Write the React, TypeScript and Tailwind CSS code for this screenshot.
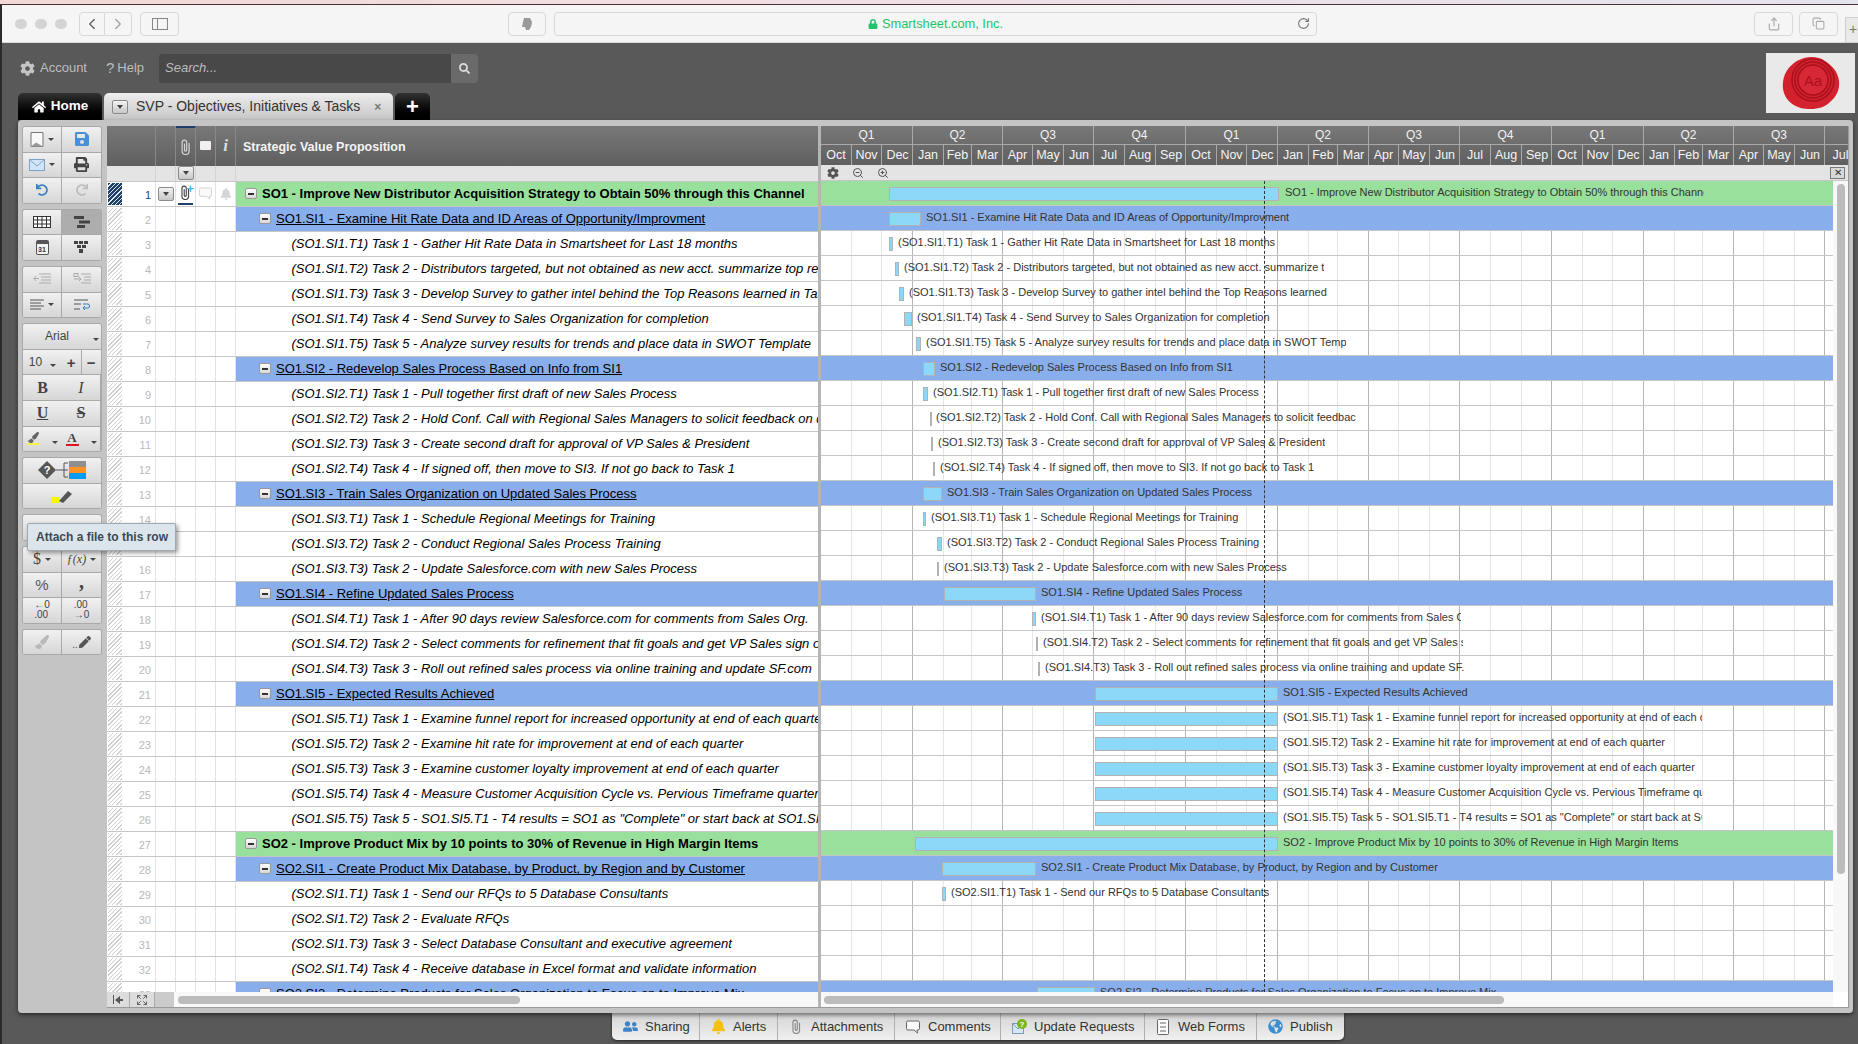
import type { ReactNode } from "react";
import {
  FaBell,
  FaCog,
  FaGlobeAmericas,
  FaHome,
  FaLock,
  FaPaintBrush,
  FaPen,
  FaPrint,
  FaRedo,
  FaSave,
  FaSearch,
  FaUndo,
  FaUserFriends,
} from "react-icons/fa";
import {
  ChevronLeft,
  ChevronRight,
  Copy,
  Expand,
  RotateCw,
  Share,
  ZoomIn,
  ZoomOut,
} from "lucide-react";

type Kind = "top" | "sub" | "task";

type Row = {
  n: number;
  kind: Kind;
  text: string;
  bar?: [number, number]; // page x of start and end
  label?: number; // page x of the gantt label
  labelEnd?: number; // where the label gets cut
};

const GANTT_X = 821;

const row = (
  n: number,
  kind: Kind,
  text: string,
  bar?: [number, number],
  label?: number,
  labelEnd?: number,
): Row => ({ n, kind, text, bar, label, labelEnd });

const ROWS: Row[] = [
  row(1, "top", "SO1 - Improve New Distributor Acquisition Strategy to Obtain 50% through this Channel", [889, 1279], 1285, 1704),
  row(2, "sub", "SO1.SI1 - Examine Hit Rate Data and ID Areas of Opportunity/Improvment", [889, 921], 926),
  row(3, "task", "(SO1.SI1.T1) Task 1 - Gather Hit Rate Data in Smartsheet for Last 18 months", [889, 893], 898),
  row(4, "task", "(SO1.SI1.T2) Task 2 - Distributors targeted, but not obtained as new acct. summarize top reasons", [895, 899], 904, 1324),
  row(5, "task", "(SO1.SI1.T3) Task 3 - Develop Survey to gather intel behind the Top Reasons learned in Task 2", [899, 904], 909, 1327),
  row(6, "task", "(SO1.SI1.T4) Task 4 - Send Survey to Sales Organization for completion", [904, 912], 917),
  row(7, "task", "(SO1.SI1.T5) Task 5 - Analyze survey results for trends and place data in SWOT Template", [916, 921], 926, 1346),
  row(8, "sub", "SO1.SI2 - Redevelop Sales Process Based on Info from SI1", [923, 935], 940),
  row(9, "task", "(SO1.SI2.T1) Task 1 - Pull together first draft of new Sales Process", [923, 928], 933),
  row(10, "task", "(SO1.SI2.T2) Task 2 - Hold Conf. Call with Regional Sales Managers to solicit feedback on draft", [930, 931], 936, 1356),
  row(11, "task", "(SO1.SI2.T3) Task 3 - Create second draft for approval of VP Sales & President", [931, 933], 938),
  row(12, "task", "(SO1.SI2.T4) Task 4 - If signed off, then move to SI3. If not go back to Task 1", [933, 935], 940),
  row(13, "sub", "SO1.SI3 - Train Sales Organization on Updated Sales Process", [923, 942], 947),
  row(14, "task", "(SO1.SI3.T1) Task 1 - Schedule Regional Meetings for Training", [923, 926], 931),
  row(15, "task", "(SO1.SI3.T2) Task 2 - Conduct Regional Sales Process Training", [937, 942], 947),
  row(16, "task", "(SO1.SI3.T3) Task 2 - Update Salesforce.com with new Sales Process", [937, 939], 944),
  row(17, "sub", "SO1.SI4 - Refine Updated Sales Process", [944, 1036], 1041),
  row(18, "task", "(SO1.SI4.T1) Task 1 - After 90 days review Salesforce.com for comments from Sales Org.", [1032, 1036], 1041, 1461),
  row(19, "task", "(SO1.SI4.T2) Task 2 - Select comments for refinement that fit goals and get VP Sales sign off", [1036, 1038], 1043, 1463),
  row(20, "task", "(SO1.SI4.T3) Task 3 - Roll out refined sales process via online training and update SF.com", [1038, 1040], 1045, 1464),
  row(21, "sub", "SO1.SI5 - Expected Results Achieved", [1095, 1278], 1283),
  row(22, "task", "(SO1.SI5.T1) Task 1 - Examine funnel report for increased opportunity at end of each quarter", [1095, 1278], 1283, 1702),
  row(23, "task", "(SO1.SI5.T2) Task 2 - Examine hit rate for improvement at end of each quarter", [1095, 1278], 1283),
  row(24, "task", "(SO1.SI5.T3) Task 3 - Examine customer loyalty improvement at end of each quarter", [1095, 1278], 1283),
  row(25, "task", "(SO1.SI5.T4) Task 4 - Measure Customer Acquisition Cycle vs. Pervious Timeframe quarter", [1095, 1278], 1283, 1702),
  row(26, "task", "(SO1.SI5.T5) Task 5 - SO1.SI5.T1 - T4 results = SO1 as \"Complete\" or start back at SO1.SI1", [1095, 1278], 1283, 1702),
  row(27, "top", "SO2 - Improve Product Mix by 10 points to 30% of Revenue in High Margin Items", [915, 1278], 1283),
  row(28, "sub", "SO2.SI1 - Create Product Mix Database, by Product, by Region and by Customer", [942, 1036], 1041),
  row(29, "task", "(SO2.SI1.T1) Task 1 - Send our RFQs to 5 Database Consultants", [942, 946], 951),
  row(30, "task", "(SO2.SI1.T2) Task 2 - Evaluate RFQs"),
  row(31, "task", "(SO2.SI1.T3) Task 3 - Select Database Consultant and executive agreement"),
  row(32, "task", "(SO2.SI1.T4) Task 4 - Receive database in Excel format and validate information"),
  row(33, "sub", "SO2.SI2 - Determine Products for Sales Organization to Focus on to Improve Mix", [1037, 1095], 1100),
];

const QUARTERS: { name: string; months: [string, number][] }[] = [
  { name: "Q1", months: [["Oct", 31], ["Nov", 30], ["Dec", 31]] },
  { name: "Q2", months: [["Jan", 31], ["Feb", 28], ["Mar", 31]] },
  { name: "Q3", months: [["Apr", 30], ["May", 31], ["Jun", 30]] },
  { name: "Q4", months: [["Jul", 31], ["Aug", 31], ["Sep", 30]] },
  { name: "Q1", months: [["Oct", 31], ["Nov", 30], ["Dec", 31]] },
  { name: "Q2", months: [["Jan", 31], ["Feb", 29], ["Mar", 31]] },
  { name: "Q3", months: [["Apr", 30], ["May", 31], ["Jun", 30]] },
  { name: "Q4", months: [["Jul", 31], ["Aug", 31], ["Sep", 30]] },
  { name: "Q1", months: [["Oct", 31], ["Nov", 30], ["Dec", 31]] },
  { name: "Q2", months: [["Jan", 31], ["Feb", 28], ["Mar", 31]] },
  { name: "Q3", months: [["Apr", 30], ["May", 31], ["Jun", 30]] },
  { name: "", months: [["Jul", 31]] },
];

const quarterDays = (q: { months: [string, number][] }) =>
  q.months.reduce((sum, m) => sum + m[1], 0);

function Clip({ size = 14, className = "" }: { size?: number; className?: string }) {
  return (
    <svg width={size * 0.7} height={size} viewBox="0 0 10 16" fill="none" stroke="currentColor" strokeWidth="1.2" className={className}>
      <path d="M8.500 4v8a3.500 3.500 0 0 1-7 0V3.500a2.300 2.300 0 0 1 4.600 0V11a1.100 1.100 0 0 1-2.200 0V4.500" />
    </svg>
  );
}

function Bubble({ size = 14, className = "" }: { size?: number; className?: string }) {
  return (
    <svg width={size} height={size} viewBox="0 0 14 14" fill="#fafafa" stroke="currentColor" strokeWidth="1" className={className}>
      <path d="M2 1h10a1.500 1.500 0 0 1 1.500 1.500v6A1.500 1.500 0 0 1 12 10h-1l.500 3L8 10H2A1.500 1.500 0 0 1 .500 8.500v-6A1.500 1.500 0 0 1 2 1z" />
    </svg>
  );
}

function TbBtn({ children, wide, on }: { children: ReactNode; wide?: boolean; on?: boolean }) {
  return (
    <div
      className={`flex h-[25.600px] items-center justify-center border-b border-r border-[#a9a9a9] [&:nth-child(2n)]:border-r-0 ${
        wide ? "w-full border-r-0" : "w-1/2"
      } ${on ? "bg-[#adadad]" : "bg-gradient-to-b from-[#f1f1f1] to-[#d6d6d6]"}`}
    >
      {children}
    </div>
  );
}

function TbGroup({ children }: { children: ReactNode }) {
  return (
    <div className="flex w-[80px] flex-wrap overflow-hidden rounded-[3px] border border-b-0 border-[#a9a9a9] text-[#555]">
      {children}
    </div>
  );
}

function Caret() {
  return <span className="ml-1 inline-block border-x-[3px] border-t-[3px] border-x-transparent border-t-[#444]" />;
}

function Lines({ w = 14 }: { w?: number }) {
  return (
    <svg width={w} height="12" viewBox="0 0 14 12" stroke="#555" strokeWidth="1">
      <path d="M0 1h14M0 4h11M0 7h14M0 10h11" />
    </svg>
  );
}

function Toolbar() {
  return (
    <div className="flex w-[89px] shrink-0 flex-col gap-[5px] pl-[4px]">
      <TbGroup>
        <TbBtn>
          <svg width="14" height="17" viewBox="0 0 14 16">
            <path d="M1 1h12v14l-12 0z" fill="#f8f8f8" stroke="#777" />
            <path d="M1 15l5-4 7 4z" fill="#999" />
          </svg>
          <Caret />
        </TbBtn>
        <TbBtn>
          <FaSave size={16} className="text-[#4a90d9]" />
        </TbBtn>
        <TbBtn>
          <svg width="16" height="12" viewBox="0 0 16 12">
            <rect x="0.500" y="0.500" width="15" height="11" fill="#cfe4f7" stroke="#7ea3c4" />
            <path d="M1 1l7 6 7-6" fill="none" stroke="#7ea3c4" />
          </svg>
          <Caret />
        </TbBtn>
        <TbBtn>
          <FaPrint size={15} className="text-[#444]" />
        </TbBtn>
        <TbBtn>
          <FaUndo size={12} className="text-[#3d7fc4]" />
        </TbBtn>
        <TbBtn>
          <FaRedo size={12} className="text-[#bdbdbd]" />
        </TbBtn>
      </TbGroup>
      <TbGroup>
        <TbBtn>
          <svg width="18" height="12" viewBox="0 0 18 12" stroke="#333" fill="#fff">
            <rect x="0.500" y="0.500" width="17" height="11" />
            <path d="M0 4h18M0 8h18M4.500 0v12M9 0v12M13.500 0v12" />
          </svg>
        </TbBtn>
        <TbBtn on>
          <svg width="16" height="12" viewBox="0 0 16 12" fill="#444">
            <path d="M0 0h10v3H0zM5 4.500h11v3H5zM3 9h8v3H3z" />
          </svg>
        </TbBtn>
        <TbBtn>
          <span className="flex h-[15px] w-[13px] items-end justify-center rounded-[2px] border border-t-[4px] border-[#555] bg-[#f4f4f4] text-[7px] font-bold leading-[9px] text-[#333]">
            31
          </span>
        </TbBtn>
        <TbBtn>
          <svg width="15" height="13" viewBox="0 0 15 13" fill="#444">
            <path d="M0 0h4v3H0zM5 0h4v3H5zM10 0h4v3h-4zM3 4h4v3H3zM8 4h4v3H8zM5 8h4v4H5z" />
          </svg>
        </TbBtn>
      </TbGroup>
      <TbGroup>
        <TbBtn>
          <svg width="18" height="12" viewBox="0 0 18 12" stroke="#aaa" fill="none">
            <path d="M6 1h12M8 4h10M8 7h10M6 10h12M1 5.500h5M3 3L1 5.500 3 8" />
          </svg>
        </TbBtn>
        <TbBtn>
          <svg width="18" height="12" viewBox="0 0 18 12" stroke="#aaa" fill="none">
            <path d="M8 1h10M11 4h7M11 7h7M8 10h10M1 6h7M6 4l2 2-2 2" />
            <rect x="1" y="0.500" width="4" height="3" />
          </svg>
        </TbBtn>
        <TbBtn>
          <Lines />
          <Caret />
        </TbBtn>
        <TbBtn>
          <svg width="16" height="12" viewBox="0 0 16 12" fill="none" stroke="#555">
            <path d="M0 1h14M0 5h7M0 10h6" />
            <path d="M9 5h5q1.500 0 1.500 2T14 9H9M11 7L9 9l2 2" stroke="#2f7fc9" />
          </svg>
        </TbBtn>
      </TbGroup>
      <TbGroup>
        <TbBtn wide>
          <span className="ml-[20px] text-[12px] text-[#444]">Arial</span>
          <span className="ml-[20px]">
            <Caret />
          </span>
        </TbBtn>
        <TbBtn>
          <span className="text-[12px] text-[#444]">10</span>
          <span className="ml-1">
            <Caret />
          </span>
        </TbBtn>
        <div className="flex w-1/2">
          <div className="flex h-[25.600px] w-1/2 items-center justify-center border-b border-r border-[#a9a9a9] bg-gradient-to-b from-[#f1f1f1] to-[#d6d6d6] text-[15px] font-bold leading-none text-[#444]">
            +
          </div>
          <div className="flex h-[25.600px] w-1/2 items-center justify-center border-b border-[#a9a9a9] bg-gradient-to-b from-[#f1f1f1] to-[#d6d6d6] text-[15px] font-bold leading-none text-[#444]">
            −
          </div>
        </div>
        <TbBtn>
          <span className="font-['Liberation_Serif',serif] text-[16px] font-bold text-[#444]">B</span>
        </TbBtn>
        <TbBtn>
          <span className="font-['Liberation_Serif',serif] text-[16px] italic text-[#444]">I</span>
        </TbBtn>
        <TbBtn>
          <span className="font-['Liberation_Serif',serif] text-[16px] font-bold text-[#444] underline">U</span>
        </TbBtn>
        <TbBtn>
          <span className="font-['Liberation_Serif',serif] text-[16px] font-bold text-[#444] line-through">S</span>
        </TbBtn>
        <TbBtn>
          <span className="flex flex-col items-center">
            <FaPaintBrush size={11} className="text-[#666]" />
            <span className="h-[2px] w-[13px] bg-[#f5f04a]" />
          </span>
          <span className="ml-2">
            <Caret />
          </span>
        </TbBtn>
        <TbBtn>
          <span className="flex flex-col items-center font-['Liberation_Serif',serif] text-[13px] font-bold leading-[12px] text-[#444]">
            A
            <span className="h-[2px] w-[13px] bg-[#e0141c]" />
          </span>
          <span className="ml-2">
            <Caret />
          </span>
        </TbBtn>
      </TbGroup>
      <TbGroup>
        <TbBtn wide>
          <svg width="50" height="20" viewBox="0 0 50 20">
            <path d="M10 1l9 9-9 9-9-9z" fill="#555" />
            <text x="10" y="14" textAnchor="middle" fontSize="11" fontWeight="bold" fill="#fff" fontFamily="Liberation Sans">?</text>
            <path d="M19 10h8M27 3v14M27 3h4M27 17h4M27 10h4" stroke="#555" fill="none" />
            <rect x="32" y="1" width="17" height="6" fill="#8f8f8f" />
            <rect x="32" y="7" width="17" height="6" fill="#ff9224" />
            <rect x="32" y="13" width="17" height="6" fill="#0a9bf0" />
          </svg>
        </TbBtn>
        <TbBtn wide>
          <svg width="22" height="16" viewBox="0 0 22 16">
            <rect x="0" y="9" width="8" height="6" fill="#f8f800" />
            <path d="M8 13l9-10 4 3-9 9z" fill="#555" />
          </svg>
        </TbBtn>
      </TbGroup>
      <TbGroup>
        <TbBtn wide>
          <span />
        </TbBtn>
      </TbGroup>
      <TbGroup>
        <TbBtn>
          <span className="font-['Liberation_Serif',serif] text-[16px] text-[#444]">$</span>
          <Caret />
        </TbBtn>
        <TbBtn>
          <span className="font-['Liberation_Serif',serif] text-[12px] italic text-[#444]">ƒ(x)</span>
          <Caret />
        </TbBtn>
        <TbBtn>
          <span className="text-[15px] text-[#555]">%</span>
        </TbBtn>
        <TbBtn>
          <span className="-mt-[8px] font-['Liberation_Serif',serif] text-[20px] font-bold leading-[14px] text-[#444]">,</span>
        </TbBtn>
        <TbBtn>
          <span className="text-[10px] leading-[10px] text-[#444]">
            ←0
            <br />
            .00
          </span>
        </TbBtn>
        <TbBtn>
          <span className="text-[10px] leading-[10px] text-[#444]">
            .00
            <br />
            →0
          </span>
        </TbBtn>
      </TbGroup>
      <TbGroup>
        <TbBtn>
          <FaPaintBrush size={14} className="text-[#b8b8b8]" />
        </TbBtn>
        <TbBtn>
          <span className="mr-[1px] mt-[6px] text-[10px] leading-none text-[#555]">..</span>
          <FaPen size={12} className="text-[#555]" />
        </TbBtn>
      </TbGroup>
    </div>
  );
}

function Minus() {
  return (
    <span className="flex h-[11px] w-[12px] shrink-0 items-center justify-center rounded-[2px] border border-[#999] bg-gradient-to-b from-white to-[#d8d8d8]">
      <span className="h-[2px] w-[6px] bg-[#333]" />
    </span>
  );
}

function SmallDrop({ className = "" }: { className?: string }) {
  return (
    <span
      className={`flex h-[14px] w-[16px] items-center justify-center rounded-[2px] border border-[#8a8a8a] bg-gradient-to-b from-[#f2f2f2] to-[#c8c8c8] ${className}`}
    >
      <span className="border-x-[3.500px] border-t-[4px] border-x-transparent border-t-[#444]" />
    </span>
  );
}

function SheetRow({ r }: { r: Row }) {
  const first = r.n === 1;
  const band =
    r.kind === "top" ? "bg-[#98e09b]" : r.kind === "sub" ? "bg-[#89aeec]" : "bg-white";
  return (
    <div className="flex h-[25px] shrink-0 border-b border-[#c6c6c6] bg-white">
      <div className="w-[15px] shrink-0 py-[1px] pl-[1px]">
        <div
          className={`h-full w-full ${
            first
              ? "bg-[repeating-linear-gradient(135deg,#1d3f68_0,#1d3f68_2px,#dfe6ee_2px,#dfe6ee_3px)]"
              : "bg-[repeating-linear-gradient(135deg,#cfcfcf_0,#cfcfcf_1px,#ffffff_1px,#ffffff_3px)]"
          }`}
        />
      </div>
      <div
        className={`w-[34px] shrink-0 border-r border-[#e2e2e2] pr-[4px] text-right text-[11px] leading-[26px] ${
          first ? "text-[#24477a]" : "text-[#b9b9b9]"
        }`}
      >
        {r.n}
      </div>
      <div className="flex w-[20px] shrink-0 items-center justify-center border-r border-[#e2e2e2]">
        {first && <SmallDrop />}
      </div>
      <div className="flex w-[20px] shrink-0 items-center justify-center border-r border-[#e2e2e2]">
        {first && (
          <span className="relative mx-[2px] flex h-[22px] w-full items-center justify-center border-b-2 border-b-[#1d3f68] text-[#444]">
            <Clip size={15} />
            <span className="absolute right-[-1px] top-[1px] text-[13px] font-bold leading-[10px] text-[#4db4ea]">+</span>
          </span>
        )}
      </div>
      <div className="flex w-[20px] shrink-0 items-center justify-center border-r border-[#e2e2e2]">
        {first && <Bubble size={13} className="text-[#cfcfcf]" />}
      </div>
      <div className="flex w-[20px] shrink-0 items-center justify-center border-r border-[#e2e2e2]">
        {first && <FaBell size={12} className="text-[#d6d6d6]" />}
      </div>
      <div
        className={`flex min-w-0 flex-1 items-center overflow-hidden whitespace-nowrap text-[13px] text-black ${band} ${
          r.kind === "top" ? "pl-[9px]" : r.kind === "sub" ? "pl-[23px]" : "pl-[55.500px]"
        }`}
      >
        {r.kind !== "task" && <Minus />}
        <span
          className={
            r.kind === "top"
              ? "ml-[5px] font-bold"
              : r.kind === "sub"
                ? "ml-[5px] underline"
                : "italic"
          }
        >
          {r.text}
        </span>
      </div>
    </div>
  );
}

function GanttRow({ r }: { r: Row }) {
  const band =
    r.kind === "top" ? "relative bg-[#98e09b]" : r.kind === "sub" ? "relative bg-[#89aeec]" : "relative";
  const thin = r.bar ? r.bar[1] - r.bar[0] <= 2 : false;
  return (
    <div className={`h-[25px] shrink-0 border-b border-[#c6c6c6] ${band}`}>
      {r.bar && (
        <div
          className={`absolute top-[6px] h-[14px] border border-[#b2b2b2] ${thin ? "bg-[#b2b2b2]" : "bg-[#8cd8f9]"}`}
          style={{ left: r.bar[0] - GANTT_X, width: r.bar[1] - r.bar[0] }}
        />
      )}
      {r.label !== undefined && (
        <div
          className="absolute top-[4px] overflow-hidden whitespace-nowrap text-[11px] leading-[14px] text-[#333]"
          style={{
            left: r.label - GANTT_X,
            width: r.labelEnd ? r.labelEnd - r.label : undefined,
          }}
        >
          {r.text}
        </div>
      )}
    </div>
  );
}

function SheetPane() {
  return (
    <div className="flex w-[711px] shrink-0 flex-col">
      <div className="flex h-[40px] bg-gradient-to-b from-[#787878] to-[#5f5f5f] text-white">
        <div className="w-[49px] shrink-0 border-r border-[#888]" />
        <div className="w-[20px] shrink-0 border-r border-[#888]" />
        <div className="flex w-[20px] shrink-0 items-center justify-center border-r border-t-2 border-[#888] border-t-[#1d3f68] text-[#d4d4d4]">
          <Clip size={16} />
        </div>
        <div className="flex w-[20px] shrink-0 items-center justify-center border-r border-[#888]">
          <span className="h-[9px] w-[11px] rounded-[1px] bg-[#f0f0f0]" />
        </div>
        <div className="flex w-[20px] shrink-0 items-center justify-center border-r border-[#888] font-['Liberation_Serif',serif] text-[17px] font-bold italic text-[#ddd]">
          i
        </div>
        <div className="flex flex-1 items-center pl-[7px] pt-[2px] text-[12.500px] font-bold text-[#f4f4f4]">
          Strategic Value Proposition
        </div>
      </div>
      <div className="flex h-[16px] border-b border-[#c6c6c6] bg-[#e4e4e4]">
        <div className="w-[49px] shrink-0 border-r border-[#d4d4d4]" />
        <div className="w-[20px] shrink-0 border-r border-[#d4d4d4]" />
        <div className="flex w-[20px] shrink-0 items-center justify-center border-r border-[#d4d4d4]">
          <SmallDrop className="h-[12px] w-[14px]" />
        </div>
        <div className="w-[20px] shrink-0 border-r border-[#d4d4d4]" />
        <div className="w-[20px] shrink-0 border-r border-[#d4d4d4]" />
      </div>
      <div className="h-[811px] overflow-hidden">
        {ROWS.map((r) => (
          <SheetRow key={r.n} r={r} />
        ))}
      </div>
      <div className="flex h-[15px] bg-[#f8f8f8]">
        <div className="flex h-full w-[67px] shrink-0 bg-[#cbcbcb]">
          <div className="flex w-[23px] items-center justify-center border-r border-[#aaa] bg-[#dcdcdc] text-[#555]">
            <span className="mr-[1px] h-[9px] w-[1px] bg-[#555]" />
            <span className="border-y-[4px] border-r-[5px] border-y-transparent border-r-[#555]" />
            <span className="h-[2px] w-[3px] bg-[#555]" />
          </div>
          <div className="flex w-[25px] items-center justify-center border-r border-[#aaa] bg-[#dcdcdc]">
            <Expand size={12} className="text-[#666]" />
          </div>
        </div>
        <div className="ml-[4px] mt-[4px] h-[8px] w-[342px] rounded-full bg-[#bcbcbc]" />
      </div>
    </div>
  );
}

function GanttPane() {
  return (
    <div className="relative flex min-w-0 flex-1 flex-col overflow-hidden">
      <div className="flex h-[40px] bg-gradient-to-b from-[#787878] to-[#5f5f5f] text-white">
        {QUARTERS.map((q, i) => (
          <div
            key={i}
            className="flex shrink-0 flex-col border-r border-[#aaa]"
            style={{ width: quarterDays(q) }}
          >
            <div className="flex h-[19px] items-center justify-center border-b border-[#aaa] text-[12px] text-[#f2f2f2]">
              {q.name}
            </div>
            <div className="flex flex-1">
              {q.months.map(([m, d], j) => (
                <div
                  key={j}
                  className="flex shrink-0 items-center justify-center border-r border-[#aaa] text-[12.500px] text-[#f4f4f4] last:border-r-0"
                  style={{ width: d }}
                >
                  {m}
                </div>
              ))}
            </div>
          </div>
        ))}
      </div>
      <div className="flex h-[16px] items-center border-b border-[#c6c6c6] bg-[#e4e4e4] pl-[6px] text-[#555]">
        <FaCog size={12} className="text-[#555]" />
        <ZoomOut size={12} className="ml-[13px]" />
        <ZoomIn size={12} className="ml-[13px]" />
        <span className="ml-auto mr-[3px] flex h-[12px] w-[15px] items-center justify-center border border-[#777] bg-[#d8d8d8] text-[10px] leading-none text-[#333]">
          ✕
        </span>
      </div>
      <div className="flex h-[811px]">
        <div className="relative min-w-0 flex-1 overflow-hidden bg-white">
          {/* month lines sit behind the rows, the colored bands cover them */}
          <div className="absolute inset-0 flex">
            {QUARTERS.map((q, i) => (
              <div key={i} className="flex shrink-0 border-r border-[#b5b5b5]" style={{ width: quarterDays(q) }}>
                {q.months.map(([, d], j) => (
                  <div key={j} className="shrink-0 border-r border-[#e6e6e6] last:border-r-0" style={{ width: d }} />
                ))}
              </div>
            ))}
          </div>
          <div className="relative flex flex-col">
            {ROWS.map((r) => (
              <GanttRow key={r.n} r={r} />
            ))}
          </div>
          <div className="absolute bottom-0 left-[443px] top-0 border-l border-dashed border-[#333]" />
        </div>
        <div className="flex w-[15px] shrink-0 justify-center bg-[#f8f8f8] pt-[3px]">
          <div className="h-[690px] w-[8px] rounded-full bg-[#bcbcbc]" />
        </div>
      </div>
      <div className="flex h-[15px] bg-[#f8f8f8]">
        <div className="min-w-0 flex-1 pl-[3px] pt-[4px]">
          <div className="h-[8px] w-[680px] rounded-full bg-[#bcbcbc]" />
        </div>
        <div className="w-[15px] shrink-0 bg-white" />
      </div>
    </div>
  );
}

const BOTTOM_TABS: { label: string; w: number; icon: ReactNode }[] = [
  { label: "Sharing", w: 88, icon: <FaUserFriends size={15} className="text-[#3f83c6]" /> },
  { label: "Alerts", w: 78, icon: <FaBell size={15} className="text-[#f4c20d]" /> },
  { label: "Attachments", w: 117, icon: <Clip size={15} className="text-[#888]" /> },
  { label: "Comments", w: 106, icon: <Bubble size={14} className="text-[#666]" /> },
  {
    label: "Update Requests",
    w: 144,
    icon: (
      <svg width="15" height="16" viewBox="0 0 15 16">
        <rect x="0.500" y="4.500" width="11" height="10" fill="#d6e6f5" stroke="#7a9ab5" />
        <path d="M1 5l5 5 5-5" fill="none" stroke="#7a9ab5" />
        <circle cx="10" cy="5" r="5" fill="#7cb518" />
        <text x="10" y="8" textAnchor="middle" fontSize="8" fontWeight="bold" fill="#fff" fontFamily="Liberation Sans">?</text>
      </svg>
    ),
  },
  {
    label: "Web Forms",
    w: 112,
    icon: (
      <svg width="12" height="16" viewBox="0 0 12 16" fill="#fafafa" stroke="#666">
        <rect x="0.500" y="0.500" width="11" height="15" rx="1" />
        <path d="M3 4h6M3 8h6M3 12h6" />
      </svg>
    ),
  },
  { label: "Publish", w: 87, icon: <FaGlobeAmericas size={15} className="text-[#3b8fd0]" /> },
];

export default function App() {
  return (
    <div className="h-[1044px] w-[1858px] overflow-hidden bg-[#2a2a2a] font-['Liberation_Sans',Arial,sans-serif]">
      <div className="h-[4px] bg-gradient-to-r from-[#f3d9d6] via-[#efdfe6] to-[#e4e4ee]" />
      <div className="h-[1px] bg-[#4a2d30]" />
      <div className="ml-[2px] flex h-[1039px] flex-col bg-[#595959]">
        {/* browser bar */}
        <div className="flex h-[38px] shrink-0 items-center border-b border-[#d9d9d9] bg-[#f5f5f5] pl-[13px] text-[#888]">
          <span className="h-[10px] w-[12px] rounded-full bg-[#d4d4d4]" />
          <span className="ml-[8px] h-[10px] w-[12px] rounded-full bg-[#d4d4d4]" />
          <span className="ml-[8px] h-[10px] w-[12px] rounded-full bg-[#d4d4d4]" />
          <div className="ml-[12px] flex h-[24px] w-[26px] items-center justify-center rounded-l-[4px] border border-[#d8d8d8]">
            <ChevronLeft size={18} strokeWidth={1.5} className="text-[#555]" />
          </div>
          <div className="flex h-[24px] w-[27px] items-center justify-center rounded-r-[4px] border border-l-0 border-[#d8d8d8]">
            <ChevronRight size={18} strokeWidth={1.5} className="text-[#999]" />
          </div>
          <div className="ml-[8px] flex h-[24px] w-[39px] items-center justify-center rounded-[4px] border border-[#d8d8d8]">
            <span className="flex h-[12px] w-[16px] border border-[#888]">
              <span className="w-[5px] border-r border-[#888]" />
            </span>
          </div>
          <div className="ml-[329px] flex h-[24px] w-[38px] items-center justify-center rounded-[4px] border border-[#d8d8d8]">
            <svg width="12" height="14" viewBox="0 0 12 14" fill="#999">
              <path d="M3 1h6l2 4-1 5-2 3H5l-1-3H1l1-5z" />
            </svg>
          </div>
          <div className="relative ml-[8px] flex h-[24px] w-[763px] items-center justify-center rounded-[4px] border border-[#d8d8d8] text-[12.800px] text-[#22c36a]">
            <FaLock size={10} className="mr-[4px]" />
            Smartsheet.com, Inc.
            <RotateCw size={13} className="absolute right-[6px] text-[#777]" />
          </div>
          <div className="ml-[437px] flex h-[24px] w-[39px] items-center justify-center rounded-[4px] border border-[#d8d8d8]">
            <Share size={14} className="text-[#aaa]" />
          </div>
          <div className="ml-[6px] flex h-[24px] w-[39px] items-center justify-center rounded-[4px] border border-[#d8d8d8]">
            <Copy size={13} className="text-[#aaa]" />
          </div>
          <div className="ml-[7px] mt-[12px] flex h-[26px] flex-1 items-center border border-r-0 border-[#d0d0d0] bg-[#e9e9e9] pl-[3px] text-[14px] text-[#777]">
            +
          </div>
        </div>

        {/* account + tabs */}
        <div className="flex h-[77px] shrink-0 justify-between">
          <div className="flex flex-col justify-end">
            <div className="flex h-[50px] items-center pl-[18px] text-[13px] text-[#bdbdbd]">
              <FaCog size={15} className="text-[#c4c4c4]" />
              <span className="ml-[5px]">Account</span>
              <span className="ml-[19px] text-[15px]">?</span>
              <span className="ml-[3px]">Help</span>
              <div className="ml-[15px] flex h-[29px] w-[319px] overflow-hidden rounded-[3px] bg-[#484848]">
                <div className="flex flex-1 items-center pl-[6px] italic text-[#bbb]">Search...</div>
                <div className="flex w-[27px] items-center justify-center bg-[#6a6a6a]">
                  <FaSearch size={11} className="text-[#ddd]" />
                </div>
              </div>
            </div>
            <div className="flex h-[27px] items-end pl-[16px]">
              <div className="flex h-[27px] w-[84px] items-center justify-center rounded-t-[5px] bg-gradient-to-b from-[#333] to-black text-[13.500px] font-bold text-white">
                <FaHome size={14} className="mr-[5px]" />
                Home
              </div>
              <div className="ml-[2px] flex h-[27px] w-[289px] items-center rounded-t-[5px] bg-gradient-to-b from-[#eeeeee] to-[#c6c6c6] pl-[8px] text-[14px] text-[#333]">
                <SmallDrop className="h-[12px] w-[14px]" />
                <span className="ml-[8px]">SVP - Objectives, Initiatives &amp; Tasks</span>
                <span className="ml-[14px] text-[12px] font-bold text-[#777]">×</span>
              </div>
              <div className="ml-[2px] flex h-[27px] w-[35px] items-center justify-center rounded-t-[5px] bg-gradient-to-b from-[#333] to-black text-[22px] font-bold leading-none text-white">
                +
              </div>
            </div>
          </div>
          <div className="mr-[3px] mt-[10px] flex h-[60px] w-[89px] items-center justify-center bg-[#e9e9e9]">
            <svg width="60" height="54" viewBox="0 0 58 54">
              <path
                d="M29 1c6 0 10 1 14 4 6 4 13 10 14 20 1 9-3 16-9 21-5 5-12 7-19 7S15 52 9 47C3 42 0 35 1 26 2 15 10 7 17 4c4-2 8-3 12-3z"
                fill="#d3212d"
              />
              <circle cx="31" cy="24" r="21" fill="none" stroke="#a8121c" strokeWidth="1.500" />
              <circle cx="31" cy="24" r="18" fill="none" stroke="#a8121c" strokeWidth="1.500" />
              <circle cx="31" cy="24" r="15" fill="#d92835" stroke="#a8121c" strokeWidth="1.500" />
              <text x="31" y="30" textAnchor="middle" fontSize="15" fill="#a8121c" fontFamily="Liberation Sans">
                Aa
              </text>
            </svg>
          </div>
        </div>

        {/* sheet panel */}
        <div className="relative ml-[16px] mr-[5px] flex h-[893px] shrink-0 rounded-[4px] bg-[#c4c4c4] pb-[5px] pr-[4px] pt-[6px] shadow-[0_2px_4px_rgba(0,0,0,0.5)]">
          <Toolbar />
          <div className="flex min-w-0 flex-1 border-b border-r border-[#9a9a9a]">
            <SheetPane />
            <div className="w-[3px] shrink-0 bg-[#b5b5b5]" />
            <GanttPane />
          </div>
          <div className="absolute left-[9px] top-[403px] z-10 flex h-[28px] w-[149px] items-center rounded-[2px] border border-[#a0a8b0] bg-[#dde5ec] pl-[8px] text-[12px] font-bold text-[#3a4a55] shadow-[2px_2px_4px_rgba(0,0,0,0.4)]">
            Attach a file to this row
          </div>
        </div>

        {/* bottom tabs */}
        <div className="ml-[610px] flex h-[27px] w-fit shrink-0 overflow-hidden rounded-b-[5px] bg-gradient-to-b from-[#d4d4d4] to-[#f0f0f0] shadow-[0_1px_3px_rgba(0,0,0,0.6)]">
          {BOTTOM_TABS.map((t) => (
            <div
              key={t.label}
              className="flex items-center border-r border-[#b0b0b0] pl-[10px] text-[13px] text-[#333] last:border-r-0"
              style={{ width: t.w }}
            >
              <span className="flex w-[16px] justify-center">{t.icon}</span>
              <span className="ml-[7px]">{t.label}</span>
            </div>
          ))}
        </div>
      </div>
    </div>
  );
}
